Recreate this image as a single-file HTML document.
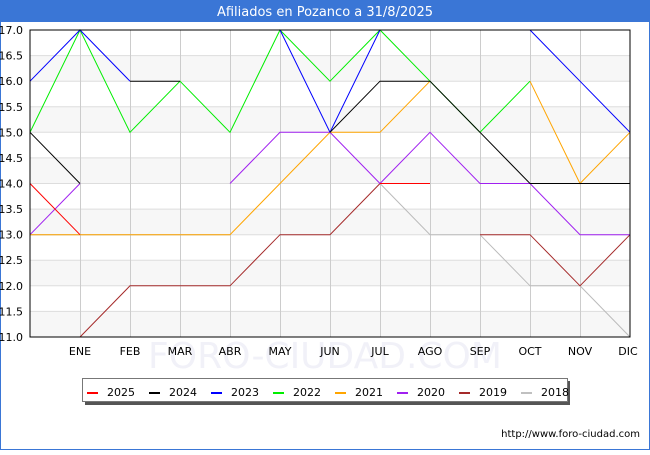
<!DOCTYPE html>
<html><head><meta charset="utf-8"><style>
body{margin:0;background:#fff}
svg text{font-family:"DejaVu Sans","Liberation Sans",sans-serif;font-size:11px;fill:#000}
</style></head><body>
<svg width="650" height="450" xmlns="http://www.w3.org/2000/svg">
<rect x="0.5" y="0.5" width="649" height="449" fill="#fff" stroke="#3a76d6"/>
<rect x="0" y="0" width="650" height="22" fill="#3a76d6"/>
<text x="325" y="16" text-anchor="middle" style="fill:#fff;font-size:13px">Afiliados en Pozanco a 31/8/2025</text>
<g fill="#f7f7f7">
<rect x="30" y="55.6" width="600" height="25.6"/><rect x="30" y="106.8" width="600" height="25.6"/>
<rect x="30" y="157.9" width="600" height="25.6"/><rect x="30" y="209.1" width="600" height="25.6"/>
<rect x="30" y="260.2" width="600" height="25.6"/><rect x="30" y="311.4" width="600" height="25.6"/>
</g>
<g stroke="#ddd" stroke-width="1">
<path d="M30 55.6H630M30 81.2H630M30 106.8H630M30 132.3H630M30 157.9H630M30 183.5H630M30 209.1H630M30 234.7H630M30 260.2H630M30 285.8H630M30 311.4H630"/>
</g>
<g stroke="#ccc"><path d="M80.5 30V337M130.5 30V337M180.5 30V337M230.5 30V337M280.5 30V337M330.5 30V337M380.5 30V337M430.5 30V337M480.5 30V337M530.5 30V337M580.5 30V337"/></g>
<text x="325" y="368" text-anchor="middle" style="font-size:36px;fill:#e8e8f4;opacity:.6">FORO-CIUDAD.COM</text>
<g fill="none" stroke-width="1">
<polyline stroke="#bbb" points="30,234.7 80,234.7 130,234.7 180,234.7 230,234.7"/>
<polyline stroke="#bbb" points="380,183.5 430,234.7 480,234.7 530,285.8 580,285.8 630,337"/>
<polyline stroke="#a52a2a" points="80,337 130,285.8 180,285.8 230,285.8 280,234.7 330,234.7 380,183.5"/>
<polyline stroke="#a52a2a" points="480,234.7 530,234.7 580,285.8 630,234.7"/>
<polyline stroke="#a020f0" points="30,234.7 80,183.5"/>
<polyline stroke="#a020f0" points="230,183.5 280,132.3 330,132.3 380,183.5 430,132.3 480,183.5 530,183.5 580,234.7 630,234.7"/>
<polyline stroke="#ffa500" points="30,234.7 80,234.7 130,234.7 180,234.7 230,234.7 280,183.5 330,132.3 380,132.3 430,81.2"/>
<polyline stroke="#ffa500" points="530,81.2 580,183.5 630,132.3"/>
<polyline stroke="#00ee00" points="30,132.3 80,30 130,132.3 180,81.2 230,132.3 280,30 330,81.2 380,30 430,81.2 480,132.3 530,81.2"/>
<polyline stroke="#0000ff" points="30,81.2 80,30 130,81.2"/>
<polyline stroke="#0000ff" points="280,30 330,132.3 380,30"/>
<polyline stroke="#0000ff" points="530,30 580,81.2 630,132.3"/>
<polyline stroke="#000" points="30,132.3 80,183.5"/>
<polyline stroke="#000" points="130,81.2 180,81.2"/>
<polyline stroke="#000" points="330,132.3 380,81.2 430,81.2 480,132.3 530,183.5 580,183.5 630,183.5"/>
<polyline stroke="#ff0000" points="30,183.5 80,234.7"/>
<path d="M380 183.5H430" stroke="#ff0000" shape-rendering="crispEdges"/>
</g>
<rect x="30" y="30" width="600" height="307" fill="none" stroke="#000"/>
<g text-anchor="end">
<text x="23" y="34">17.0</text><text x="23" y="59.6">16.5</text><text x="23" y="85.2">16.0</text><text x="23" y="110.8">15.5</text><text x="23" y="136.3">15.0</text><text x="23" y="161.9">14.5</text><text x="23" y="187.5">14.0</text><text x="23" y="213.1">13.5</text><text x="23" y="238.7">13.0</text><text x="23" y="264.2">12.5</text><text x="23" y="289.8">12.0</text><text x="23" y="315.4">11.5</text><text x="23" y="341">11.0</text>
</g>
<g text-anchor="middle">
<text x="80" y="355">ENE</text><text x="130" y="355">FEB</text><text x="180" y="355">MAR</text><text x="230" y="355">ABR</text><text x="280" y="355">MAY</text><text x="330" y="355">JUN</text><text x="380" y="355">JUL</text><text x="430" y="355">AGO</text><text x="480" y="355">SEP</text><text x="530" y="355">OCT</text><text x="580" y="355">NOV</text><text x="628" y="355">DIC</text>
</g>
<rect x="85" y="381" width="485" height="24" fill="#555"/>
<rect x="82.5" y="378.5" width="485" height="23" fill="#fff" stroke="#777"/>
<g stroke-width="2">
<path d="M87 393h11" stroke="#f00"/><path d="M149 393h11" stroke="#000"/><path d="M211 393h11" stroke="#00f"/><path d="M273 393h11" stroke="#0e0"/><path d="M335 393h11" stroke="#ffa500"/><path d="M397 393h11" stroke="#a020f0"/><path d="M459 393h11" stroke="#a52a2a"/><path d="M521 393h11" stroke="#c0c0c0"/>
</g>
<text x="107" y="396">2025</text><text x="169" y="396">2024</text><text x="231" y="396">2023</text><text x="293" y="396">2022</text><text x="355" y="396">2021</text><text x="417" y="396">2020</text><text x="479" y="396">2019</text><text x="541" y="396">2018</text>
<text x="640" y="437" text-anchor="end" style="font-size:10px">http://www.foro-ciudad.com</text>
</svg>
</body></html>
